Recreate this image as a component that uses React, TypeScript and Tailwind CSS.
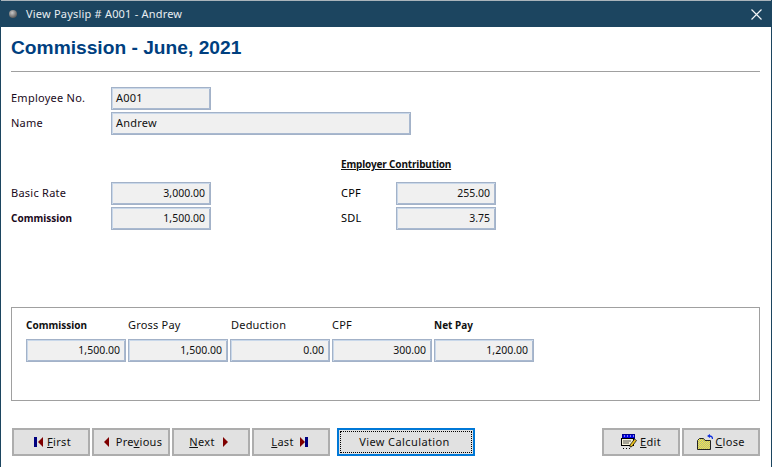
import React from "react";

const Field = ({ value, right, w = "w-[100px]" }: { value: string; right?: boolean; w?: string }) => (
  <div
    className={`${w} h-[23px] shrink-0 border border-[#a3b2c8] shadow-[inset_1px_1px_0_#c9d8ea,inset_-1px_-1px_0_#a9b9d0] bg-[#f0f0f0] flex items-center text-[#111] ${
      right ? "justify-end pr-[5px] text-[10.5px]" : "pl-[4px] tracking-[0.2px]"
    }`}
  >
    {value}
  </div>
);

const Row = ({ label, bold, children }: { label: string; bold?: boolean; children: React.ReactNode }) => (
  <div className="flex items-center h-[23px]">
    <div className={`w-[100px] text-[#1a0a20] ${bold ? "font-bold text-[10px]" : "tracking-[0.25px]"}`}>{label}</div>
    {children}
  </div>
);

const FirstIcon = () => (
  <svg width="9" height="10" viewBox="0 0 9 10">
    <rect x="0" y="0" width="3" height="10" fill="#00007f" />
    <path d="M9 0V10L4 5Z" fill="#7f0000" />
  </svg>
);
const PrevIcon = () => (
  <svg width="5" height="10" viewBox="0 0 5 10">
    <path d="M5 0V10L0 5Z" fill="#7f0000" />
  </svg>
);
const NextIcon = () => (
  <svg width="5" height="10" viewBox="0 0 5 10">
    <path d="M0 0V10L5 5Z" fill="#7f0000" />
  </svg>
);
const LastIcon = () => (
  <svg width="8" height="10" viewBox="0 0 8 10">
    <path d="M0 0V10L5 5Z" fill="#7f0000" />
    <rect x="5" y="0" width="3" height="10" fill="#00007f" />
  </svg>
);
const EditIcon = () => (
  <svg width="16" height="16" viewBox="0 0 16 16">
    <rect x="1.5" y="0.5" width="12" height="4" fill="#0000e0" stroke="#000090" />
    <path d="M3 2h1M6 2h1M9 2h1M12 2h1" stroke="#fff" />
    <rect x="0.5" y="4.5" width="12" height="7" fill="#f4f0d8" stroke="#000" />
    <path d="M2 7h8M2 9h6" stroke="#555" />
    <path d="M9 11l4.5-6 2 1.500-4.500 6-2 .5z" fill="#e8c020" stroke="#000" strokeWidth="0.7" />
    <path d="M2 14.500h1M5 14.500h1M8 14.500h1" stroke="#000" />
  </svg>
);
const CloseIcon = () => (
  <svg width="16" height="16" viewBox="0 0 16 16">
    <defs>
      <pattern id="dither" width="2" height="2" patternUnits="userSpaceOnUse">
        <rect width="2" height="2" fill="#f8f040" />
        <rect width="1" height="1" fill="#b0b090" />
        <rect x="1" y="1" width="1" height="1" fill="#b0b090" />
      </pattern>
    </defs>
    <path d="M0.500 15.500V6.500L2.500 4.500H6.500L8 6.500H13.500V15.500Z" fill="url(#dither)" stroke="#222" />
    <path d="M15.500 5C15.500 3 14.500 2 12.500 2" fill="none" stroke="#1030e0" strokeWidth="1.300" />
    <path d="M10 2L13 0V4Z" fill="#1030e0" />
  </svg>
);

const Btn = ({ extra, children }: { extra: string; children: React.ReactNode }) => (
  <div
    className={`w-[78px] h-[28px] border-2 border-[#adadad] bg-[#e1e1e1] flex items-center justify-center text-[#111] tracking-[0.3px] ${extra}`}
  >
    {children}
  </div>
);

const Col = ({ label, value, bold, shift }: { label: string; value: string; bold?: boolean; shift?: boolean }) => (
  <div className="flex flex-col">
    <div
      className={`h-[22px] leading-[16px] text-[#111] ${bold ? "font-bold text-[10px]" : "tracking-[0.2px]"} ${
        shift ? "pl-px" : ""
      }`}
    >
      {label}
    </div>
    <Field value={value} right />
  </div>
);

export default function App() {
  return (
    <div className="w-[772px] h-[467px] overflow-hidden flex flex-col bg-white border-x border-[#1c4560] text-[11px] font-['Noto_Sans',sans-serif]">
      <div className="h-[27px] shrink-0 bg-[#1c4560] border-t border-[#aab4bb] flex items-center justify-between pl-[8px] pr-[9px] text-[#e8eef2]">
        <div className="flex items-center gap-[9px]">
          <div className="w-[8px] h-[8px] rounded-full bg-[radial-gradient(circle_at_40%_35%,#c8c8c8,#333)]" />
          <span className="tracking-[0.2px]">View Payslip # A001 - Andrew</span>
        </div>
        <svg width="11" height="11" viewBox="0 0 11 11" stroke="#f2f5f7" strokeWidth="1.2">
          <path d="M0.5 0.5L10.500 10.500M10.500 0.5L0.5 10.500" />
        </svg>
      </div>

      <div className="flex-1 flex flex-col px-[10px]">
        <h1 className="mt-[9px] h-[24px] leading-[24px] text-[19.2px] font-bold text-[#003f7f] font-['Liberation_Sans',sans-serif]">
          Commission - June, 2021
        </h1>
        <div className="mt-[11px] h-px w-[749px] bg-[#a0a0a0]" />

        <div className="mt-[15px] flex flex-col gap-[2px]">
          <Row label="Employee No.">
            <Field value="A001" />
          </Row>
          <Row label="Name">
            <Field value="Andrew" w="w-[300px]" />
          </Row>
        </div>

        <div className="mt-[21px] flex">
          <div className="w-[330px] pt-[26px] flex flex-col gap-[2px]">
            <Row label="Basic Rate">
              <Field value="3,000.00" right />
            </Row>
            <Row label="Commission" bold>
              <Field value="1,500.00" right />
            </Row>
          </div>
          <div className="flex flex-col">
            <div className="h-[26px] font-bold text-[10px] tracking-[-0.15px] leading-[16px] underline text-[#111]">
              Employer Contribution
            </div>
            <div className="flex flex-col gap-[2px]">
              <div className="flex items-center h-[23px]">
                <div className="w-[55px] tracking-[0.2px]">CPF</div>
                <Field value="255.00" right />
              </div>
              <div className="flex items-center h-[23px]">
                <div className="w-[55px] tracking-[0.2px]">SDL</div>
                <Field value="3.75" right />
              </div>
            </div>
          </div>
        </div>

        <div className="mt-[77px] w-[749px] h-[94px] border border-[#a0a0a0] px-[14px] pt-[9px] flex gap-[2px]">
          <Col label="Commission" value="1,500.00" bold />
          <Col label="Gross Pay" value="1,500.00" />
          <Col label="Deduction" value="0.00" shift />
          <Col label="CPF" value="300.00" />
          <Col label="Net Pay" value="1,200.00" bold />
        </div>

        <div className="mt-[27px] pl-[1px] flex">
          <div className="flex gap-[2px]">
            <Btn extra="gap-[4px] pl-[3px]">
              <FirstIcon />
              <span>
                <u>F</u>irst
              </span>
            </Btn>
            <Btn extra="gap-[7px] pl-[4px]">
              <PrevIcon />
              <span>
                Pre<u>v</u>ious
              </span>
            </Btn>
            <Btn extra="gap-[8px] pr-[5px]">
              <span>
                <u>N</u>ext
              </span>
              <NextIcon />
            </Btn>
            <Btn extra="gap-[6px] pr-[3px]">
              <span>
                <u>L</u>ast
              </span>
              <LastIcon />
            </Btn>
          </div>
          <div className="ml-[7px] w-[138px] h-[28px] border-2 border-[#0078d7] bg-[#e1e1e1] p-px">
            <div className="w-full h-full border border-dotted border-black flex items-center justify-center pr-[3px] text-[#111] tracking-[0.4px]">
              View Calculation
            </div>
          </div>
          <div className="ml-auto mr-[1px] flex gap-[2px]">
            <Btn extra="gap-[3px]">
              <EditIcon />
              <span>
                <u>E</u>dit
              </span>
            </Btn>
            <Btn extra="gap-[2px]">
              <CloseIcon />
              <span>
                <u>C</u>lose
              </span>
            </Btn>
          </div>
        </div>
      </div>
    </div>
  );
}
